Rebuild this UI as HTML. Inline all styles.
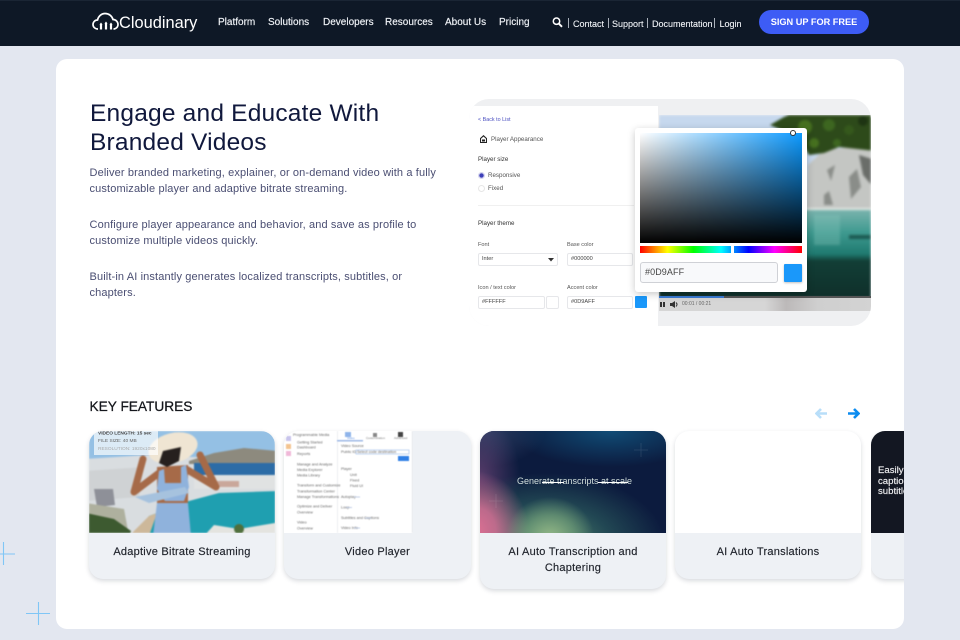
<!DOCTYPE html>
<html lang="en"><head><meta charset="utf-8"><title>Cloudinary</title>
<style>
*{box-sizing:border-box;margin:0;padding:0}
html,body{width:960px;height:640px;overflow:hidden;background:#e3e7f0;font-family:"Liberation Sans",sans-serif}
.a{position:absolute;white-space:nowrap}
#hdr{position:absolute;left:0;top:0;width:960px;height:46px;background:#0e1826;border-top:1px solid #1a2534}
.nav{position:absolute;top:16px;font-size:10px;line-height:12px;color:#f1f4f8;white-space:nowrap;-webkit-text-stroke:.15px #f1f4f8}
.sub{position:absolute;top:17px;font-size:9px;line-height:12px;color:#f1f4f8;white-space:nowrap;-webkit-text-stroke:.1px #f1f4f8}
.sep{position:absolute;top:17px;width:1px;height:10px;background:#aab1bb}
.p{position:absolute;left:89.5px;font-size:11px;line-height:16px;color:#4a4e72;letter-spacing:.13px;white-space:nowrap}
.h{position:absolute;left:90px;font-size:24.5px;line-height:29px;color:#10183c;letter-spacing:.2px;white-space:nowrap}
.t{position:absolute;font-size:5.6px;line-height:8px;color:#555;white-space:nowrap;filter:blur(.3px)}
.f{position:absolute;background:#fff;border:1px solid #e6e7ea;border-radius:2px;height:13px;font-size:5.6px;line-height:11px;color:#444;padding-left:3px}
.card{position:absolute;top:431px;width:186px;height:148px;background:#eef1f5;border-radius:14px;overflow:hidden;box-shadow:0 2px 5px rgba(40,50,70,.18)}
.cap{position:absolute;left:0;right:0;top:113px;text-align:center;font-size:11px;line-height:16px;color:#20242c;letter-spacing:.25px;-webkit-text-stroke:.15px #20242c}
</style></head><body>
<div id="hdr">
<svg class="a" style="left:92px;top:11px" width="27" height="19" viewBox="0 0 27 19" fill="none"><path d="M6 17C3 17 1 15 1 12.500 1 10 3 8 5.500 8 6.500 4 9.500 1.500 13 1.500 17 1.500 20 4 21 7.500 24 7.500 26 10 26 12.500 26 15 24 17 21.500 17" stroke="#fff" stroke-width="1.700"/><path d="M9 17.500V12M14 17.500V11M19 17.500V12" stroke="#fff" stroke-width="2.200"/><path d="M7.500 12.500 9 10.500 10.500 12.500M12.500 11.500 14 9.500 15.500 11.500M17.500 12.500 19 10.500 20.500 12.500" fill="#fff"/></svg>
<div class="a" style="left:119px;top:11px;font-size:16.4px;line-height:22px;color:#fff">Cloudinary</div>
<div class="nav" style="left:218px">Platform</div>
<div class="nav" style="left:268px">Solutions</div>
<div class="nav" style="left:323px">Developers</div>
<div class="nav" style="left:385px">Resources</div>
<div class="nav" style="left:445px">About Us</div>
<div class="nav" style="left:499px">Pricing</div>
<svg class="a" style="left:552px;top:16px" width="11" height="11" viewBox="0 0 11 11" fill="none"><circle cx="4.500" cy="4.200" r="3.200" stroke="#fff" stroke-width="1.500"/><path d="M6.800 6.600 10 9.800" stroke="#fff" stroke-width="1.900"/></svg>
<div class="sep" style="left:568px"></div><div class="sub" style="left:573px">Contact</div>
<div class="sep" style="left:608px"></div><div class="sub" style="left:612px">Support</div>
<div class="sep" style="left:647px"></div><div class="sub" style="left:652px">Documentation</div>
<div class="sep" style="left:714px"></div><div class="sub" style="left:719.500px">Login</div>
<div class="a" style="left:759px;top:9px;width:110px;height:24px;border-radius:12px;background:#3d5cf5;color:#fff;font-weight:700;font-size:9.200px;line-height:25px;text-align:center">SIGN UP FOR FREE</div>
</div>

<svg class="a" style="left:0;top:535px" width="60" height="105"><g stroke="#80c6f6" stroke-width="1.100" fill="none"><path d="M3.500 7V30M0 19H15M38.500 67V90M26 78.500H50"/></g></svg>

<div class="a" style="left:56px;top:59px;width:848px;height:570px;background:#fff;border-radius:11px"></div>

<div class="h" style="top:99px">Engage and Educate With</div>
<div class="h" style="top:128px">Branded Videos</div>
<div class="p" style="top:165px">Deliver branded marketing, explainer, or on-demand video with a fully</div>
<div class="p" style="top:181px">customizable player and adaptive bitrate streaming.</div>
<div class="p" style="top:217px">Configure player appearance and behavior, and save as profile to</div>
<div class="p" style="top:233px">customize multiple videos quickly.</div>
<div class="p" style="top:269px">Built-in AI instantly generates localized transcripts, subtitles, or</div>
<div class="p" style="top:285px">chapters.</div>

<!-- hero visual -->
<div class="a" style="left:469px;top:99px;width:402px;height:227px;background:#eff0f2;border-radius:20px;overflow:hidden">
 <div class="a" style="left:190px;top:16px;width:212px;height:183px;overflow:hidden">
 <svg class="a" style="left:0;top:0;filter:blur(1.300px)" width="212" height="183" viewBox="0 0 212 183">
  <defs>
   <linearGradient id="w" x1="0" y1="0" x2="0" y2="1"><stop offset="0" stop-color="#7ab3ad"/><stop offset=".25" stop-color="#3f9a90"/><stop offset=".5" stop-color="#1f7a70"/><stop offset=".58" stop-color="#123e36"/><stop offset="1" stop-color="#0f2f2a"/></linearGradient>
  </defs>
  <rect width="212" height="183" fill="#c6d8ee"/>
  <rect y="95" width="212" height="88" fill="url(#w)"/>
  <path d="M149 50 165 35 212 30V95H147Z" fill="#c4c6c3"/>
  <path d="M168 55 176 50 172 66ZM190 62 198 54 202 72 192 84ZM165 80 170 76 174 90 165 90Z" fill="#8a8d89"/>
  <path d="M200 40 216 45V74L204 60Z" fill="#6a6d69"/>
  <path d="M111 10 125 2 140 -4H216V36L180 32 165 38 150 40 140 22 125 16Z" fill="#2d4a1a"/>
  <circle cx="146" cy="12" r="7" fill="#46701f"/><circle cx="170" cy="10" r="6" fill="#3d6620"/><circle cx="155" cy="28" r="5" fill="#46701f"/><circle cx="190" cy="15" r="5" fill="#35581c"/><circle cx="178" cy="28" r="4" fill="#3d6620"/><circle cx="204" cy="6" r="5" fill="#1e3413"/>
  <rect x="147" y="93" width="69" height="2" fill="#e3e8e4"/>
  <rect x="155" y="100" width="26" height="30" fill="#8fc9bf" opacity=".3"/>
  <rect x="190" y="120" width="26" height="4" fill="#1c5a52"/>
 </svg>
 </div>
 <div class="a" style="left:190px;top:199px;width:212px;height:13px;background:linear-gradient(90deg,#d6d6d6 0,#d6d6d6 50%,#bcb9b9 60%,#cfcfcf 75%,#d3d3d3)"></div>
 <div class="a" style="left:190px;top:197px;width:212px;height:2px;background:#555"></div>
 <div class="a" style="left:190px;top:197px;width:65px;height:2px;background:#3a7bd5"></div>
 <div class="a" style="left:191px;top:203px;width:2px;height:5px;background:#333"></div>
 <div class="a" style="left:194px;top:203px;width:2px;height:5px;background:#333"></div>
 <svg class="a" style="left:201px;top:202px" width="8" height="7"><path d="M0 2H2L5 0V7L2 5H0Z" fill="#333"/><path d="M6 1.500Q8 3.500 6 5.500" stroke="#333" fill="none"/></svg>
 <div class="t" style="left:213px;top:201px;font-size:5px;color:#666">00:01 / 00:21</div>
 <!-- settings panel -->
 <div class="a" style="left:0;top:7px;width:189px;height:220px;background:#fff"></div>
</div>
<div class="t" style="left:478px;top:116px;color:#4a4fc0;font-size:5.400px">&lt; Back to List</div>
<svg class="a" style="left:480px;top:135px" width="7" height="8"><path d="M.5 3.500 3.500.8 6.500 3.500V7.500H.5Z" fill="none" stroke="#222" stroke-width="1.100"/><rect x="2" y="4.500" width="3" height="2" fill="#222"/></svg>
<div class="t" style="left:491px;top:136px;font-size:6.200px">Player Appearance</div>
<div class="t" style="left:478px;top:156px;font-size:6.200px;color:#333">Player size</div>
<div class="a" style="left:478px;top:172px;width:7px;height:7px;border-radius:50%;border:1px solid #d5d5ee;background:radial-gradient(circle,#3d3fb8 0 2px,#fff 2.500px)"></div>
<div class="t" style="left:488px;top:172px;font-size:6.200px">Responsive</div>
<div class="a" style="left:478px;top:185px;width:7px;height:7px;border-radius:50%;border:1px solid #e6e6e6"></div>
<div class="t" style="left:488px;top:185px;font-size:6.200px">Fixed</div>
<div class="a" style="left:478px;top:205px;width:156px;height:1px;background:#f0f0f0"></div>
<div class="t" style="left:478px;top:220px;font-size:6.200px;color:#333">Player theme</div>
<div class="t" style="left:478px;top:241px">Font</div>
<div class="t" style="left:567px;top:241px">Base color</div>
<div class="f" style="left:478px;top:253px;width:80px">Inter</div>
<svg class="a" style="left:548px;top:258px" width="6" height="4"><path d="M0 0H6L3 3.500Z" fill="#333"/></svg>
<div class="f" style="left:567px;top:253px;width:66px">#000000</div>
<div class="t" style="left:478px;top:284px">Icon / text color</div>
<div class="t" style="left:567px;top:284px">Accent color</div>
<div class="f" style="left:478px;top:296px;width:67px">#FFFFFF</div>
<div class="f" style="left:546px;top:296px;width:13px"></div>
<div class="f" style="left:567px;top:296px;width:66px">#0D9AFF</div>
<div class="a" style="left:635px;top:296px;width:12px;height:12px;background:#1a98fa;border-radius:1px"></div>

<!-- colour picker -->
<div class="a" style="left:635px;top:128px;width:172px;height:164px;background:#fff;border-radius:3px;box-shadow:0 2px 8px rgba(0,0,0,.22)"></div>
<div class="a" style="left:640px;top:133px;width:162px;height:110px;background:linear-gradient(180deg,rgba(0,0,0,0),#000),linear-gradient(90deg,#fff,#0d9aff)"></div>
<div class="a" style="left:790px;top:130px;width:6px;height:6px;border-radius:50%;border:1px solid #333;background:#fff"></div>
<div class="a" style="left:640px;top:246px;width:162px;height:7px;background:linear-gradient(90deg,#f00,#ff0 17%,#0f0 33%,#0ff 50%,#00f 67%,#f0f 83%,#f00)"></div>
<div class="a" style="left:731px;top:246px;width:3px;height:7px;background:#fff"></div>
<div class="a" style="left:640px;top:262px;width:138px;height:21px;background:#f8f9fb;border:1px solid #cfd1d6;border-radius:3px;font-size:9px;line-height:19px;padding-left:4px;color:#444;letter-spacing:.1px">#0D9AFF</div>
<div class="a" style="left:784px;top:264px;width:18px;height:18px;background:#1a98fa;border-radius:1px;box-shadow:0 1px 2px rgba(0,0,0,.25)"></div>

<!-- key features -->
<div class="a" style="left:89.500px;top:398px;font-size:13.700px;line-height:18px;color:#15171c;-webkit-text-stroke:.25px #15171c">KEY FEATURES</div>
<svg class="a" style="left:815px;top:408px" width="12" height="11"><path d="M6 1 1.500 5.500 6 10M2 5.500H12" fill="none" stroke="#b8def9" stroke-width="2.600"/></svg>
<svg class="a" style="left:848px;top:408px" width="12" height="11"><path d="M6 1 10.500 5.500 6 10M10 5.500H0" fill="none" stroke="#0b8cf0" stroke-width="2.600"/></svg>

<div class="card" style="left:89px">
 <div class="a" style="left:0;top:0;width:186px;height:102px;overflow:hidden">
 <svg class="a" style="left:0;top:0;filter:blur(.7px)" width="186" height="102" viewBox="0 0 186 102">
  <rect width="186" height="30" fill="#94c0e4"/>
  <path d="M-3 28 60 24 189 30V105H-3Z" fill="#d9dde0"/>
  <path d="M100 30 125 22 155 17 189 20V33H100Z" fill="#8d8a7e"/>
  <rect x="105" y="32" width="84" height="12" fill="#2c6ca6"/>
  <path d="M105 44H189V58H105Z" fill="#e0e2e2"/>
  <path d="M120 50H150V56H120Z" fill="#c9a79a"/>
  <path d="M45 105 60 85 100 70 130 62 189 60V92L130 105Z" fill="#1f9fb0"/>
  <path d="M40 105 60 85 68 82 60 105Z" fill="#cdb89a"/>
  <path d="M-3 40 55 36 50 66 -3 70Z" fill="#cfd2d4"/>
  <path d="M5 58 24 58 26 74 8 76Z" fill="#8e9098"/>
  <path d="M-3 72 35 78 40 105H-3Z" fill="#aeb09e"/>
  <path d="M-3 82 25 88 42 100 40 105H-3Z" fill="#3d5a30"/>
  <path d="M115 105 125 94 150 98 186 92V105Z" fill="#e4e4e0"/>
  <circle cx="150" cy="98" r="5" fill="#4f6f3c"/>
  <path d="M64 105 68 72H99L102 105Z" fill="#8fb2dc"/>
  <g fill="none" stroke="#a66a48" stroke-width="7" stroke-linecap="round" stroke-linejoin="round"><path d="M70 42 45 61 54 28"/><path d="M97 38 127 56 111 24"/></g>
  <path d="M68 36 99 34 99 72H68Z" fill="#a66a48"/>
  <path d="M70 40 68 58 76 70 95 70 100 56 97 34 92 36 92 52 76 52 75 38Z" fill="#8fb2dc"/>
  <path d="M46 66 96 56 100 62 60 72Z" fill="#a6c2de"/>
  <ellipse cx="84" cy="17" rx="25" ry="15" fill="#efe5d3" transform="rotate(-14 84 17)"/>
  <path d="M74 20 92 16 90 30 78 36 70 32Z" fill="#26201e"/>
 </svg>
 </div>
 <svg class="a" style="left:0;top:0" width="186" height="102" viewBox="0 0 186 102">
  <rect x="5" width="64" height="24" fill="#fff" opacity=".68"/>
  <text x="9" y="3.500" font-family="Liberation Sans" font-size="4.800" font-weight="700" fill="#444">VIDEO LENGTH: 15 sec</text>
  <text x="9" y="11" font-family="Liberation Sans" font-size="4.800" fill="#666">FILE SIZE: 40 MB</text>
  <text x="9" y="19" font-family="Liberation Sans" font-size="4.800" fill="#aaa">RESOLUTION: 1920x1080</text>
 </svg>
 <div class="cap">Adaptive Bitrate Streaming</div>
</div>

<div class="card" style="left:284px;width:187px">
 <div class="a" style="left:0;top:0;width:129px;height:102px;background:#fff;overflow:hidden">
 <svg class="a" style="left:0;top:0;filter:blur(.55px)" width="129" height="102" viewBox="0 0 129 102" font-family="Liberation Sans">
  <rect x="53" width="1" height="102" fill="#eceef2"/>
  <rect x="128" width="1" height="102" fill="#dfe2e8"/>
  <rect x="53" y="9" width="26" height="1.500" fill="#9db8e6"/>
  <rect x="61" y="1" width="6" height="5" fill="#8fb4ea"/>
  <rect x="89" y="2" width="4" height="4" fill="#888"/>
  <rect x="114" y="1" width="5" height="5" fill="#444"/>
  <rect x="72" y="19" width="53" height="4" fill="#fff" stroke="#a9c4ec" stroke-width=".7"/>
  <rect x="114" y="25" width="11" height="5" fill="#2f7fe6"/>
  <rect x="2" y="5" width="5" height="5" fill="#c8c4ec"/><rect x="2" y="13" width="5" height="5" fill="#f3c490"/><rect x="2" y="20" width="5" height="5" fill="#f0b8d8"/>
  <g font-size="3.800" fill="#666">
   <text x="9" y="5">Programmable Media</text>
   <text x="13" y="12.500">Getting Started</text><text x="13" y="17.500">Dashboard</text><text x="13" y="24">Reports</text>
   <text x="13" y="34.500">Manage and Analyze</text><text x="13" y="40">Media Explorer</text><text x="13" y="45.500">Media Library</text>
   <text x="13" y="55.500">Transform and Customize</text><text x="13" y="61.500">Transformation Center</text><text x="13" y="67">Manage Transformations</text>
   <text x="13" y="76.500">Optimize and Deliver</text><text x="13" y="82.500">Overview</text>
   <text x="13" y="92.500">Video</text><text x="13" y="98.500">Overview</text>
   <text x="57" y="16">Video Source</text><text x="57" y="22">Public ID</text><text x="73" y="22">Select code destination</text>
   <text x="57" y="39">Player</text><text x="66" y="45">Unit</text><text x="66" y="50.500">Fixed</text><text x="66" y="56">Fluid UI</text>
   <text x="57" y="67">Autoplay</text><text x="57" y="77.500">Loop</text><text x="57" y="88">Subtitles and Captions</text><text x="57" y="98">Video Info</text>
  </g>
  <text x="63" y="8" font-size="3" fill="#5b8fe0">Video</text><text x="82" y="8" font-size="3" fill="#777">Customization</text><text x="110" y="8" font-size="3" fill="#777">Advanced</text>
  <g fill="none" stroke="#c3cfe6" stroke-width="1"><path d="M70 66H76M62 76.500H68M81 87H87M70 97H76"/></g>
 </svg>
 </div>
 <div class="cap">Video Player</div>
</div>

<div class="card" style="left:480px;height:158px">
 <div class="a" style="left:0;top:0;width:186px;height:102px;background:radial-gradient(ellipse 44px 40px at 70px 106px,rgba(150,185,135,.95) 0,rgba(125,170,125,.6) 55%,rgba(100,150,120,0) 100%),radial-gradient(ellipse 55px 60px at -6px 100px,#df7094 0,rgba(205,110,145,.9) 40%,rgba(130,80,130,0) 100%),radial-gradient(ellipse 120px 70px at 65px 112px,rgba(90,145,115,.95) 0,rgba(45,95,95,.65) 55%,rgba(20,50,70,0) 100%),radial-gradient(ellipse 40px 60px at 0 45px,rgba(110,70,120,.75) 0,rgba(80,60,110,0) 100%),radial-gradient(ellipse 100px 36px at 130px 0,#104c76 0,rgba(15,60,100,0) 100%),radial-gradient(ellipse 60px 36px at 5px 0,#2c3f64 0,rgba(40,60,100,0) 100%),#0c1b3e"></div>
 <svg class="a" style="left:0;top:0" width="186" height="102"><g stroke="#fff" stroke-opacity=".12" stroke-width=".8"><path d="M161 12V26M154 19H168M16 63V77M9 70H23"/></g></svg>
 <div class="a" style="left:37px;top:44px;font-size:9px;line-height:12px;color:#d2dfdc">Generate transcripts at scale</div>
 <div class="a" style="left:62px;top:50.500px;width:22px;height:1.500px;background:#fff"></div>
 <div class="a" style="left:118px;top:50.500px;width:30px;height:1.500px;background:#fff"></div>
 <div class="cap">AI Auto Transcription and<br>Chaptering</div>
</div>

<div class="card" style="left:675px">
 <div class="a" style="left:0;top:0;width:186px;height:102px;background:#fff"></div>
 <div class="cap">AI Auto Translations</div>
</div>

<div class="a" style="left:871px;top:431px;width:33px;height:160px;overflow:hidden">
 <div class="a" style="left:0;top:0;width:60px;height:148px;background:#eef1f5;border-radius:14px;overflow:hidden;box-shadow:0 2px 5px rgba(40,50,70,.18)">
  <div class="a" style="left:0;top:0;width:60px;height:102px;background:#131722"></div>
  <div class="a" style="left:7px;top:35px;font-size:9.600px;line-height:10.700px;color:#f0f0f2;white-space:pre;-webkit-text-stroke:.15px #f0f0f2">Easily
captions
subtitles</div>
 </div>
</div>
</body></html>
